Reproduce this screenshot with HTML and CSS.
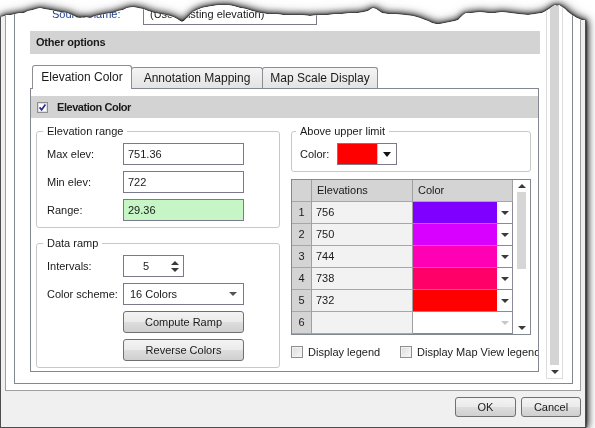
FILE: index.html
```html
<!DOCTYPE html>
<html lang="en">
<head>
  <meta charset="UTF-8">
  <meta name="viewport" content="width=device-width, initial-scale=1.0">
  <title>Elevation Color Options</title>
  <link rel="stylesheet" href="styles.css">
</head>
<body>
  <div class="shot">
    <div class="window">
      <div class="panel">
        <div class="scroller">
          <div class="content">
            <div class="top-row">
              <span class="link-label">Source name:</span>
              <div class="textbox wide">(Use existing elevation)</div>
            </div>

            <div class="section-bar">Other options</div>

            <div class="tabs">
              <div class="tab active t1">Elevation Color</div>
              <div class="tab t2">Annotation Mapping</div>
              <div class="tab t3">Map Scale Display</div>
            </div>

            <div class="tab-panel">
              <div class="check-bar">
                <svg class="check" width="11" height="11" viewBox="0 0 11 11">
                  <rect x="0.5" y="0.5" width="10" height="10" fill="#f4f4f4" stroke="#8e8f8f"/>
                  <rect x="1.5" y="1.5" width="8" height="8" fill="#fff" stroke="#dedede"/>
                  <path d="M2.6 5.4 L4.6 7.8 L8.4 2.6" fill="none" stroke="#2c2f8f" stroke-width="1.7"/>
                </svg>
                <span>Elevation Color</span>
              </div>

              <div class="columns">
                <div class="col left">
                  <fieldset class="range">
                    <legend>Elevation range</legend>
                    <div class="row"><label>Max elev:</label><div class="textbox">751.36</div></div>
                    <div class="row"><label>Min elev:</label><div class="textbox">722</div></div>
                    <div class="row"><label>Range:</label><div class="textbox green">29.36</div></div>
                  </fieldset>

                  <fieldset class="ramp">
                    <legend>Data ramp</legend>
                    <div class="row">
                      <label>Intervals:</label>
                      <div class="spin">
                        <span class="spin-value">5</span>
                        <span class="spin-arrows"><i class="arrow-up"></i><i class="arrow-down"></i></span>
                      </div>
                    </div>
                    <div class="row">
                      <label>Color scheme:</label>
                      <div class="combo"><span>16 Colors</span><i class="arrow-down grey"></i></div>
                    </div>
                    <div class="row"><label></label><div class="btn">Compute Ramp</div></div>
                    <div class="row"><label></label><div class="btn">Reverse Colors</div></div>
                  </fieldset>
                </div>

                <div class="col right">
                  <fieldset class="upper">
                    <legend>Above upper limit</legend>
                    <div class="row">
                      <label>Color:</label>
                      <div class="picker"><span class="picker-color"></span><span class="picker-drop"><i class="arrow-down big"></i></span></div>
                    </div>
                  </fieldset>

                  <div class="grid">
                    <div class="grid-body">
                      <div class="gh"></div><div class="gh">Elevations</div><div class="gh">Color</div>

                      <div class="rh">1</div><div class="gc">756</div>
                      <div class="cc"><span class="swatch c1"></span><span class="drop"><i class="arrow-down"></i></span></div>

                      <div class="rh">2</div><div class="gc">750</div>
                      <div class="cc"><span class="swatch c2"></span><span class="drop"><i class="arrow-down"></i></span></div>

                      <div class="rh">3</div><div class="gc">744</div>
                      <div class="cc"><span class="swatch c3"></span><span class="drop"><i class="arrow-down"></i></span></div>

                      <div class="rh">4</div><div class="gc">738</div>
                      <div class="cc"><span class="swatch c4"></span><span class="drop"><i class="arrow-down"></i></span></div>

                      <div class="rh">5</div><div class="gc">732</div>
                      <div class="cc"><span class="swatch c5"></span><span class="drop"><i class="arrow-down"></i></span></div>

                      <div class="rh">6</div><div class="gc"></div>
                      <div class="cc"><span class="swatch empty"></span><span class="drop"><i class="arrow-down faint"></i></span></div>
                    </div>
                    <div class="gscroll">
                      <span class="sb-btn"><i class="arrow-up"></i></span>
                      <span class="sb-thumb"></span>
                      <span class="sb-space"></span>
                      <span class="sb-btn"><i class="arrow-down"></i></span>
                    </div>
                  </div>

                  <div class="legend-row">
                    <span class="cb first"><span class="box"></span>Display legend</span>
                    <span class="cb"><span class="box"></span>Display Map View legend</span>
                  </div>
                </div>
              </div>
            </div>
          </div>

          <div class="vscroll">
            <span class="vs-thumb"></span>
            <span class="vs-btn"><i class="arrow-down"></i></span>
          </div>
        </div>
      </div>

      <div class="footer">
        <div class="btn ok">OK</div>
        <div class="btn cancel">Cancel</div>
      </div>
    </div>
  </div>
</body>
</html>
```

FILE: styles.css
```css
body {
  margin: 0;
  background: #fff;
  font-family: "Segoe UI", "Liberation Sans", Arial, sans-serif;
  font-size: 11px;
  color: #1a1a1a;
  overflow: hidden;
}

/* torn screenshot edge */
.shot {
  width: 586px;
  filter: drop-shadow(0 0 1px #000) drop-shadow(0 0 3px rgba(0, 0, 0, .75)) drop-shadow(1px 0 4px rgba(0, 0, 0, .6));
}

.window {
  height: 428px;
  box-sizing: border-box;
  background: #f0f0f0;
  border: 1px solid #4d4d4d;
  border-top: none;
  padding: 0 4px;
  clip-path: polygon(
    0px 17px, 4px 16px, 7px 15px, 11px 15px, 15px 14px, 20px 13px, 24px 13px, 28px 11px,
    33px 10px, 36px 9px, 40px 8px, 44px 9px, 50px 10px, 55px 11px, 60px 12px, 67px 13px,
    72px 15px, 76px 17px, 80px 18px, 85px 17px, 90px 18px, 95px 16px, 100px 15px, 105px 14px,
    110px 13px, 113px 13px, 118px 11px, 123px 10px, 127px 8px, 133px 7px, 138px 8px, 143px 9px,
    148px 11px, 154px 13px, 160px 14px, 166px 15px, 170px 16px, 173px 17px, 177px 19px, 180px 21px,
    182px 22px, 184px 21px, 187px 18px, 190px 15px, 193px 12px, 197px 10px, 202px 8px, 207px 7px,
    213px 6px, 220px 5px, 227px 5px, 233px 6px, 240px 8px, 246px 9px, 252px 11px, 260px 13px,
    267px 14px, 275px 14px, 283px 15px, 292px 15px, 300px 15px, 310px 16px, 320px 15px, 328px 15px,
    335px 14px, 342px 14px, 350px 13px, 358px 13px, 364px 12px, 368px 11px, 371px 9px, 373px 8px,
    376px 9px, 379px 11px, 382px 13px, 388px 14px, 395px 14px, 405px 15px, 413px 16px, 420px 18px,
    425px 20px, 428px 21px, 432px 23px, 436px 24px, 440px 24px, 445px 23px, 450px 22px, 455px 21px,
    458px 20px, 461px 17px, 463px 15px, 466px 13px, 472px 13px, 480px 12px, 488px 13px, 495px 13px,
    502px 12px, 510px 13px, 518px 14px, 528px 15px, 535px 14px, 542px 13px, 546px 11px, 549px 9px,
    552px 7px, 555px 5px, 557px 6px, 559px 5px, 562px 7px, 565px 9px, 568px 12px, 572px 15px,
    577px 18px, 582px 20px, 586px 20px, 586px 428px, 0px 428px);
}

.panel {
  height: 391px;
  box-sizing: border-box;
  background: #fff;
  border: 1px solid #a0a0a0;
  border-top: none;
  padding: 0 7px 6px 8px;
}

.scroller {
  display: flex;
  height: 384px;
  box-sizing: border-box;
  border: 1px solid #828790;
  border-top: none;
  padding-right: 9px;
}

.content {
  width: 531px;
  flex: none;
  box-sizing: border-box;
  padding-left: 15px;
}

.top-row {
  display: flex;
  align-items: center;
  height: 22px;
  margin-top: 3px;
}

.link-label {
  width: 91px;
  margin-left: 22px;
  color: #1f3f8a;
}

.textbox {
  width: 121px;
  height: 22px;
  box-sizing: border-box;
  border: 1px solid #7a7a8c;
  background: #fff;
  padding: 0 4px;
  line-height: 20px;
  white-space: nowrap;
  overflow: hidden;
}

.textbox.wide {
  width: 174px;
  padding-left: 6px;
}

.textbox.green {
  background: #c6f5c6;
}

.section-bar {
  width: 510px;
  height: 23px;
  margin-top: 6px;
  background: #d3d3d3;
  padding-left: 6px;
  box-sizing: border-box;
  line-height: 23px;
  font-weight: bold;
  letter-spacing: -0.2px;
}

/* tabs */
.tabs {
  display: flex;
  align-items: flex-end;
  height: 23px;
  margin-top: 11px;
  padding-left: 2px;
  position: relative;
  z-index: 1;
}

.tab {
  height: 21px;
  box-sizing: border-box;
  border: 1px solid #8c8e94;
  border-bottom: none;
  border-radius: 3px 3px 0 0;
  background: linear-gradient(#f4f4f4, #e3e3e3);
  text-align: center;
  line-height: 20px;
  font-size: 12px;
  margin-left: -1px;
}

.tab.active {
  height: 24px;
  margin-bottom: -1px;
  margin-left: 0;
  background: #fff;
  line-height: 23px;
  position: relative;
  z-index: 2;
}

.t1 { width: 100px; }
.t2 { width: 132px; }
.t3 { width: 116px; }

.tab-panel {
  width: 509px;
  height: 284px;
  box-sizing: border-box;
  border: 1px solid #828790;
  background: #fff;
  padding-top: 7px;
  overflow: hidden;
}

.check-bar {
  display: flex;
  align-items: center;
  height: 22px;
  background: #d3d3d3;
  padding-left: 6px;
  font-weight: bold;
  letter-spacing: -0.45px;
}

.check {
  margin-right: 9px;
}

.columns {
  display: flex;
  gap: 11px;
  padding: 0 7px 0 5px;
  margin-top: 6px;
}

.col {
  flex: none;
}

.col.left { width: 244px; }
.col.right { width: 240px; }

fieldset {
  margin: 0;
  min-width: 0;
  border: 1px solid #c8c8c8;
  border-radius: 3px;
  padding: 5px 9px 6px 10px;
}

legend {
  padding: 0 4px;
  margin-left: -4px;
  line-height: 14px;
}

fieldset.ramp {
  margin-top: 8px;
}

fieldset.upper {
  padding-left: 8px;
}

.row {
  display: flex;
  align-items: center;
  height: 22px;
}

.row + .row {
  margin-top: 6px;
}

.row label {
  width: 76px;
  flex: none;
}

.upper .row label {
  width: 37px;
}

/* arrows */
.arrow-down,
.arrow-up {
  display: block;
  width: 0;
  height: 0;
  border-left: 4px solid transparent;
  border-right: 4px solid transparent;
}

.arrow-down { border-top: 4px solid #3a3a3a; }
.arrow-up { border-bottom: 4px solid #3a3a3a; }
.arrow-down.grey { border-top-color: #555; }
.arrow-down.faint { border-top-color: #c8c8c8; }
.arrow-down.big { border-top-color: #111; border-top-width: 5px; }

.spin {
  display: flex;
  width: 61px;
  height: 22px;
  box-sizing: border-box;
  border: 1px solid #7a7a8c;
}

.spin-value {
  flex: 1;
  text-align: center;
  line-height: 20px;
}

.spin-arrows {
  width: 14px;
  display: flex;
  flex-direction: column;
  align-items: center;
  justify-content: center;
  gap: 3px;
  padding-right: 1px;
}

.combo {
  display: flex;
  align-items: center;
  justify-content: space-between;
  width: 121px;
  height: 22px;
  box-sizing: border-box;
  border: 1px solid #7a7a8c;
  padding: 0 6px;
}

.btn {
  display: flex;
  align-items: center;
  justify-content: center;
  width: 121px;
  height: 22px;
  box-sizing: border-box;
  border: 1px solid #707070;
  border-radius: 3px;
  background: linear-gradient(#f3f3f3 0%, #ebebeb 48%, #dddddd 52%, #cfcfcf 100%);
  color: #1a1a1a;
}

.picker {
  display: flex;
  height: 22px;
  box-sizing: border-box;
  border: 1px solid #7a7a8c;
}

.picker-color {
  width: 39px;
  background: #ff0000;
}

.picker-drop {
  width: 18px;
  display: flex;
  align-items: center;
  justify-content: center;
  background: #fff;
  border-left: 1px solid #c8c8d4;
}

/* grid */
.grid {
  display: flex;
  margin-top: 7px;
  border: 1px solid #828790;
}

.grid-body {
  display: grid;
  grid-template-columns: 20px 101px 100px;
  grid-auto-rows: 22px;
}

.grid-body > div {
  box-sizing: border-box;
  border-right: 1px solid #a0a0a0;
  border-bottom: 1px solid #a7a7a7;
  white-space: nowrap;
}

.gh {
  background: #d4d4d4;
  padding-left: 5px;
  line-height: 21px;
}

.rh {
  background: #d4d4d4;
  text-align: center;
  line-height: 21px;
}

.gc {
  background: #f2f2f2;
  padding-left: 4px;
  line-height: 21px;
}

.grid-body > .cc {
  display: flex;
  border-bottom-color: #8b8b98;
  border-right-color: #8b8b98;
}

.swatch {
  width: 84px;
}

.swatch.empty { background: #fff; }
.c1 { background: #8000ff; }
.c2 { background: #d800ff; }
.c3 { background: #ff00b4; }
.c4 { background: #ff0068; }
.c5 { background: #ff0000; }

.drop {
  flex: 1;
  display: flex;
  align-items: center;
  justify-content: center;
  background: #fff;
}

.gscroll {
  width: 17px;
  display: flex;
  flex-direction: column;
  align-items: center;
  background: #fff;
}

.sb-btn {
  height: 12px;
  display: flex;
  align-items: center;
  justify-content: center;
}

.sb-thumb {
  width: 9px;
  height: 77px;
  background: #d6d6d6;
}

.sb-space {
  flex: 1;
}

.legend-row {
  display: flex;
  align-items: center;
  height: 12px;
  margin-top: 11px;
  white-space: nowrap;
}

.cb {
  display: inline-flex;
  align-items: center;
  flex: none;
}

.cb.first {
  width: 109px;
}

.cb .box {
  width: 12px;
  height: 12px;
  box-sizing: border-box;
  border: 1px solid #8e8f8f;
  background: linear-gradient(135deg, #dcdcdc, #f8f8f8);
  box-shadow: inset 0 0 0 1px #f2f2f2;
  margin-right: 5px;
}

/* outer scroll bar */
.vscroll {
  width: 17px;
  flex: none;
  display: flex;
  flex-direction: column;
  align-items: center;
  box-sizing: border-box;
  border: 1px solid #dcdcdc;
  border-top: none;
  margin-bottom: 4px;
}

.vs-thumb {
  flex: 1;
  width: 9px;
  background: #d4d4d4;
}

.vs-btn {
  height: 13px;
  display: flex;
  align-items: center;
  justify-content: center;
}

.footer {
  display: flex;
  justify-content: flex-end;
  gap: 5px;
  padding-top: 6px;
}

.footer .btn {
  height: 20px;
}

.btn.ok { width: 61px; }
.btn.cancel { width: 60px; }
```
